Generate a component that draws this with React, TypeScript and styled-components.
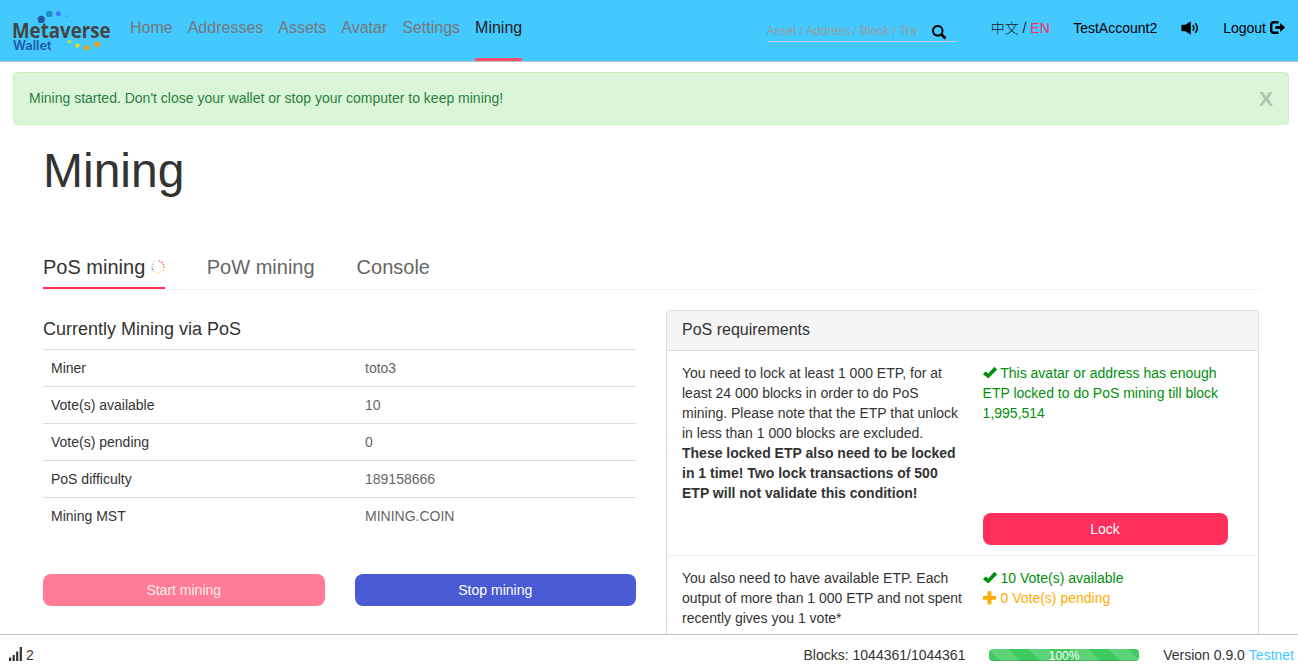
import React from "react";
import styled, { createGlobalStyle } from "styled-components";

const GlobalStyle = createGlobalStyle`
  *, *::before, *::after { box-sizing: border-box; }
  html, body, #root { height: 100%; }
  body {
    margin: 0;
    background: #fff;
    color: #333;
    font: 14px/20px "Liberation Sans", "Noto Sans CJK SC", sans-serif;
    overflow: hidden;
  }
`;

const Page = styled.div`
  display: flex;
  flex-direction: column;
  height: 100vh;
`;

const Header = styled.header`
  display: flex;
  flex: none;
  height: 62px;
  background: #44c9ff;
  border-bottom: 1px solid #c3c3c3;
  padding: 0 13px 0 12px;
`;

const Logo = styled.svg`
  flex: none;
  width: 102px;
  height: 44px;
  margin-top: 9px;
  overflow: visible;
`;

const Nav = styled.nav`
  display: flex;
  gap: 15px;
  margin-left: 16px;
`;

const NavLink = styled.a<{ $active?: boolean }>`
  height: 61px;
  padding-top: 18px;
  font-size: 16px;
  color: ${(p) => (p.$active ? "#222" : "#777")};
  border-bottom: 3px solid ${(p) => (p.$active ? "#ff4d6e" : "transparent")};
`;

const Search = styled.div`
  display: flex;
  justify-content: space-between;
  width: 190px;
  height: 22px;
  margin: 20px 34px 0 auto;
  padding-right: 10px;
  border-bottom: 1px solid #c0ccd2;
  font-size: 12px;
  line-height: 22px;
  color: #999;
`;

const Account = styled.div`
  display: flex;
  padding-top: 18px;
  color: #000;
`;

const Language = styled.span`
  width: 82.5px;
  color: #222;
`;

const Chinese = styled.span`
  font-weight: 300;
`;

const Accent = styled.span`
  color: #ff2e5b;
`;

const UserName = styled.span`
  width: 107.5px;
`;

const Sound = styled.span`
  width: 42.5px;
`;

const Logout = styled.span`
  display: flex;
  gap: 4px;
`;

const Icon = styled.svg<{ $top?: number }>`
  display: inline-block;
  flex: none;
  vertical-align: top;
  margin-top: ${(p) => p.$top ?? 3}px;
  fill: currentColor;
`;

const Main = styled.main`
  flex: 1;
  min-height: 0;
  overflow: hidden;
`;

const Alert = styled.div`
  display: flex;
  justify-content: space-between;
  height: 53px;
  margin: 10px 9px 0 13px;
  padding: 15px;
  border: 1px solid #c9f0bf;
  border-radius: 4px;
  background: #dbf5d8;
  color: #2b7f3f;
`;

const Close = styled.span`
  font-size: 21px;
  font-weight: bold;
  line-height: 22px;
  color: #afc4ad;
`;

const Content = styled.div`
  padding: 0 39px 0 43px;
`;

const Title = styled.h1`
  margin: 19px 0 0;
  font-size: 48px;
  font-weight: normal;
  line-height: 53px;
`;

const Tabs = styled.div`
  display: flex;
  gap: 42px;
  width: 1218px;
  height: 42px;
  margin-top: 51px;
  border-bottom: 1px solid #f3f3f3;
`;

const Tab = styled.div<{ $active?: boolean }>`
  display: flex;
  height: 41px;
  padding-top: 5px;
  font-size: 20px;
  line-height: 28px;
  color: ${(p) => (p.$active ? "#333" : "#666")};
  border-bottom: 2px solid ${(p) => (p.$active ? "#ff2e5b" : "transparent")};
`;

const Spinner = styled.svg`
  width: 14px;
  height: 14px;
  margin: 6.5px 0 0 5.5px;
`;

const Columns = styled.div`
  display: grid;
  grid-template-columns: 593px 593px;
  gap: 30px;
  margin-top: 20px;
`;

const Subtitle = styled.h4`
  margin: 9px 0 10px;
  font-size: 18px;
  font-weight: normal;
  line-height: 20px;
`;

const Row = styled.div`
  display: grid;
  grid-template-columns: 314px 1fr;
  height: 37px;
  padding: 8px;
  border-top: 1px solid #ddd;
`;

const Value = styled.span`
  color: #666;
`;

const Buttons = styled.div`
  display: grid;
  grid-template-columns: 1fr 1fr;
  gap: 30px;
  margin-top: 40px;
`;

const Button = styled.button<{ $color: string; $text?: string }>`
  display: block;
  width: 100%;
  height: 32px;
  padding: 0;
  border: 0;
  border-radius: 8px;
  font: inherit;
  color: ${(p) => p.$text ?? "#fff"};
  background: ${(p) => p.$color};
`;

const Panel = styled.section`
  height: 400px;
  border: 1px solid #ddd;
  border-radius: 4px;
  overflow: hidden;
`;

const PanelHeading = styled.div`
  height: 40px;
  padding: 9px 15px;
  border-bottom: 1px solid #ddd;
  background: #f5f5f5;
  font-size: 16px;
`;

const Requirement = styled.div`
  display: grid;
  grid-template-columns: 282px 245px;
  gap: 18.6px;
  padding: 12px 15px 10px;
  border-bottom: 1px solid #eee;
`;

const Status = styled.div`
  display: flex;
  flex-direction: column;
  justify-content: space-between;
`;

const StatusText = styled.div<{ $color: string }>`
  color: ${(p) => p.$color};
`;

const Action = styled.div`
  margin-top: 10px;
`;

const LockRow = styled(Requirement)`
  height: 205px;
`;

const Footer = styled.footer`
  display: flex;
  flex: none;
  height: 38px;
  padding: 10px 4px 0 9px;
  border-top: 1px solid #c3c3c3;
  background: #fff;
`;

const Peers = styled.div`
  display: flex;
  gap: 4px;
  margin-right: auto;
`;

const Progress = styled.div`
  width: 150px;
  height: 12px;
  margin: 4px 24px 0 23.7px;
  border-radius: 4px;
  background-color: #3fcb60;
  background-image: linear-gradient(45deg, rgba(255, 255, 255, .15) 25%, transparent 25%, transparent 50%, rgba(255, 255, 255, .15) 50%, rgba(255, 255, 255, .15) 75%, transparent 75%, transparent);
  background-size: 40px 40px;
  box-shadow: inset 0 -1px 0 rgba(0, 0, 0, .15);
  color: #fff;
  font-size: 12px;
  line-height: 14px;
  text-align: center;
`;

const Version = styled.span`
  margin-right: 4px;
`;

const Network = styled.span`
  color: #44c9ff;
`;

const CheckIcon = () => (
  <Icon width="14" height="14" viewBox="0 0 14 14">
    <path d="M.2 7.9 2.3 5.8Q2.7 5.4 3.1 5.8L5.2 7.5 11 1.2Q11.4.8 11.8 1.2L13.8 3.1Q14.1 3.5 13.7 3.9L5.7 12Q5.2 12.5 4.8 12L.2 8.6Q-.1 8.3.2 7.9Z" />
  </Icon>
);

const PlusIcon = () => (
  <Icon width="14" height="14" viewBox="0 0 14 14">
    <path d="M4.9.2H8q.4 0 .4.4v4.3h4.3q.4 0 .4.4v3.1q0 .4-.4.4H8.4v4.3q0 .4-.4.4H4.9q-.4 0-.4-.4V8.8H.1q-.4 0-.4-.4V5.3q0-.4.4-.4h4.4V.6q0-.4.4-.4Z" />
  </Icon>
);

const spinnerColors = ["#ff7a7a", "#ff5a5a", "#f4705a", "#f29a72", "#f7c5a0", "#fbe6b8", "#ffe070", "#fff4c0", "#cfdcf5", "#5f8fd8", "#85aee4", "#a8cbf4", "#d8e8fc", "#fde5ec"];

const rows = [
  ["Miner", "toto3"],
  ["Vote(s) available", "10"],
  ["Vote(s) pending", "0"],
  ["PoS difficulty", "189158666"],
  ["Mining MST", "MINING.COIN"],
];

const links = ["Home", "Addresses", "Assets", "Avatar", "Settings", "Mining"];

export default function App() {
  return (
    <Page>
      <GlobalStyle />
      <Header>
        <Logo viewBox="12 9 102 44">
          <text x="12" y="38.3" fontFamily="Open Sans, Noto Sans, sans-serif" fontSize="20.5" fontWeight="700" fill="#444" textLength="98.5" lengthAdjust="spacingAndGlyphs">Metaverse</text>
          <text x="13" y="49.8" fontFamily="Inter, sans-serif" fontSize="12.6" fontWeight="600" fill="#2059a6" textLength="38.5" lengthAdjust="spacingAndGlyphs">Wallet</text>
          <circle cx="41.3" cy="19.4" r="3.6" fill="#2059a6" />
          <circle cx="49.3" cy="14" r="3.3" fill="#238acb" />
          <circle cx="58.4" cy="13.8" r="2.5" fill="#4575ff" />
          <circle cx="66.4" cy="16.3" r="1.5" fill="#29b8ff" />
          <circle cx="71.4" cy="21.6" r="1" fill="#29b8ff" />
          <circle cx="69.4" cy="41.6" r="1.7" fill="#d9dd28" />
          <circle cx="77.5" cy="45.6" r="2.1" fill="#f7dc0c" />
          <circle cx="86.8" cy="47.7" r="2.5" fill="#ffa200" />
          <circle cx="97" cy="44.2" r="2.8" fill="#f5a010" />
        </Logo>
        <Nav>
          {links.map((l) => <NavLink key={l} $active={l === "Mining"}>{l}</NavLink>)}
        </Nav>
        <Search>
          <span>Asset / Address / Block / Tra</span>
          <Icon $top={5} width="15" height="15" viewBox="0 0 15 15">
            <path d="M5.8 0a5.8 5.8 0 1 0 3 10.7l3.2 3.2q.5.5 1 0l1-1q.5-.5 0-1l-3.3-3.2A5.8 5.8 0 0 0 5.8 0Zm0 2a3.8 3.8 0 1 1 0 7.6 3.8 3.8 0 0 1 0-7.6Z" fill="#000" />
          </Icon>
        </Search>
        <Account>
          <Language><Chinese>中文</Chinese> / <Accent>EN</Accent></Language>
          <UserName>TestAccount2</UserName>
          <Sound>
            <Icon width="18" height="14" viewBox="0 0 18 14">
              <path d="M1 3.7H4.3L9 .7Q9.8.3 9.8 1V13q0 .7-.8.3L4.3 10.2H1q-.6 0-.6-.6V4.3q0-.6.6-.6Z" />
              <path d="M11.7 4.2Q14 7 11.7 9.8M14.3 2.2Q18.4 7 14.3 11.7" fill="none" stroke="currentColor" strokeWidth="1.4" />
            </Icon>
          </Sound>
          <Logout>
            Logout
            <Icon width="15" height="14" viewBox="0 0 15 14">
              <path d="M8.5 1.2H3.7Q1.2 1.2 1.2 3.7v5.5q0 2.5 2.5 2.5h4.8" fill="none" stroke="currentColor" strokeWidth="2.4" />
              <path d="M10.1 2.7q0-.7.6-.2l4 3.6q.4.4 0 .8l-4 3.6q-.6.5-.6-.2V8H5.9q-.5 0-.5-.5v-2q0-.5.5-.5h4.2Z" />
            </Icon>
          </Logout>
        </Account>
      </Header>
      <Main>
        <Alert>
          <span>Mining started. Don't close your wallet or stop your computer to keep mining!</span>
          <Close>X</Close>
        </Alert>
        <Content>
          <Title>Mining</Title>
          <Tabs>
            <Tab $active>
              PoS mining
              <Spinner viewBox="-7 -7 14 14">
                {spinnerColors.map((c, i) => {
                  const a = ((i * 360) / spinnerColors.length - 75) * (Math.PI / 180);
                  return <circle key={i} cx={6 * Math.cos(a)} cy={6 * Math.sin(a)} r="0.85" fill={c} />;
                })}
              </Spinner>
            </Tab>
            <Tab>PoW mining</Tab>
            <Tab>Console</Tab>
          </Tabs>
          <Columns>
            <div>
              <Subtitle>Currently Mining via PoS</Subtitle>
              {rows.map(([label, value]) => (
                <Row key={label}><span>{label}</span><Value>{value}</Value></Row>
              ))}
              <Buttons>
                <Button $color="#ff7b96" $text="#ffeef1">Start mining</Button>
                <Button $color="#4a5ad4">Stop mining</Button>
              </Buttons>
            </div>
            <Panel>
              <PanelHeading>PoS requirements</PanelHeading>
              <LockRow>
                <div>
                  You need to lock at least 1 000 ETP, for at least 24 000 blocks in order to do PoS mining. Please note that the ETP that unlock in less than 1 000 blocks are excluded. <b>These locked ETP also need to be locked in 1 time! Two lock transactions of 500 ETP will not validate this condition!</b>
                </div>
                <Status>
                  <StatusText $color="#008f0c"><CheckIcon /> This avatar or address has enough ETP locked to do PoS mining till block 1,995,514</StatusText>
                  <Action><Button $color="#ff2e5b">Lock</Button></Action>
                </Status>
              </LockRow>
              <Requirement>
                <div>You also need to have available ETP. Each output of more than 1 000 ETP and not spent recently gives you 1 vote*</div>
                <div>
                  <StatusText $color="#008f0c"><CheckIcon /> 10 Vote(s) available</StatusText>
                  <StatusText $color="#ffab00"><PlusIcon /> 0 Vote(s) pending</StatusText>
                </div>
              </Requirement>
            </Panel>
          </Columns>
        </Content>
      </Main>
      <Footer>
        <Peers>
          <Icon $top={2} width="13" height="14" viewBox="0 0 13 14">
            <path d="M0 10.5h2.2V14H0ZM3.6 8h2.2v6H3.6ZM7.1 4.5h2.2V14H7.1ZM10.7 0h2.2v14h-2.2Z" />
          </Icon>
          <span>2</span>
        </Peers>
        <span>Blocks: 1044361/1044361</span>
        <Progress>100%</Progress>
        <Version>Version 0.9.0</Version>
        <Network>Testnet</Network>
      </Footer>
    </Page>
  );
}
